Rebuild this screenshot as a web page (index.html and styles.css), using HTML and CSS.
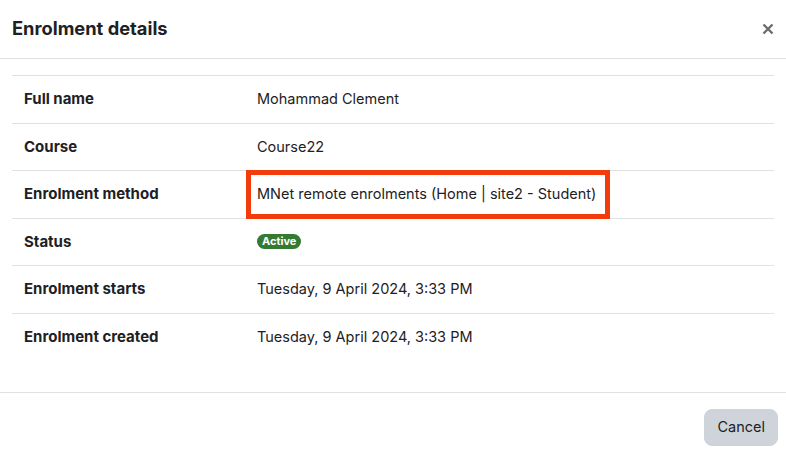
FILE: index.html
```html
<!DOCTYPE html>
<html lang="en">
<head>
    <meta charset="UTF-8">
    <meta name="viewport" content="width=device-width, initial-scale=1.0">
    <title>Enrolment details</title>
    <link rel="stylesheet" href="styles.css">
</head>
<body>
    <div class="modal">
        <div class="modal-header">
            <h5 class="modal-title">Enrolment details</h5>
            <button class="close" aria-label="Close">
                <svg width="12" height="12" viewBox="0 0 12 12">
                    <path d="M1.5 1.5 L10.5 10.5 M10.5 1.5 L1.5 10.5" stroke="#6a6e72" stroke-width="2.4" stroke-linecap="butt" />
                </svg>
            </button>
        </div>
        <div class="modal-body">
            <table class="details">
                <tr>
                    <th>Full name</th>
                    <td>Mohammad Clement</td>
                </tr>
                <tr>
                    <th>Course</th>
                    <td>Course22</td>
                </tr>
                <tr>
                    <th>Enrolment method</th>
                    <td class="highlighted">
                        MNet remote enrolments (Home | site2 - Student)
                        <span class="highlight-box"></span>
                    </td>
                </tr>
                <tr>
                    <th>Status</th>
                    <td><span class="badge">Active</span></td>
                </tr>
                <tr>
                    <th>Enrolment starts</th>
                    <td>Tuesday, 9 April 2024, 3:33 PM</td>
                </tr>
                <tr>
                    <th>Enrolment created</th>
                    <td>Tuesday, 9 April 2024, 3:33 PM</td>
                </tr>
            </table>
        </div>
        <div class="modal-footer">
            <button class="btn-secondary">Cancel</button>
        </div>
    </div>
</body>
</html>
```

FILE: styles.css
```css
body {
    margin: 0;
    background-color: #fff;
    color: #1d2125;
    font-family: 'Inter', 'Liberation Sans', sans-serif;
    font-size: 15px;
    line-height: 22.5px;
}

.modal {
    width: 786px;
    background-color: #fff;
}

.modal-header {
    display: flex;
    align-items: center;
    justify-content: space-between;
    height: 58px;
    padding: 0 12px;
    border-bottom: 1px solid #dee2e6;
}

.modal-title {
    margin: 0;
    font-size: 18.3px;
    font-weight: 700;
    line-height: 1.2;
}

.close {
    display: flex;
    align-items: center;
    justify-content: center;
    width: 20px;
    height: 20px;
    margin-right: -4px;
    padding: 0;
    border: none;
    background: none;
    cursor: pointer;
}

.modal-body {
    padding: 16px 12px;
}

.details {
    width: 100%;
    border-collapse: collapse;
    margin-bottom: 16px;
}

.details th,
.details td {
    padding: 12px;
    border-top: 1px solid #dee2e6;
    text-align: left;
    vertical-align: top;
}

.details th {
    width: 209px;
    font-weight: 700;
}

.details td {
    font-size: 14.5px;
}

.highlighted {
    position: relative;
}

.highlight-box {
    position: absolute;
    left: 1px;
    top: -1px;
    width: 354px;
    height: 39px;
    border: 5px solid #f33b0b;
}

.badge {
    display: inline-block;
    padding: 2px 5px;
    border-radius: 10px;
    background-color: #357a32;
    color: #fff;
    font-size: 11px;
    font-weight: 700;
    line-height: 1;
    vertical-align: 2px;
}

.modal-footer {
    display: flex;
    justify-content: flex-end;
    padding: 16px 8px 11px 12px;
    border-top: 1px solid #dee2e6;
}

.btn-secondary {
    padding: 6px 12px;
    border: 1px solid #ced4da;
    border-radius: 8px;
    background-color: #ced4da;
    color: #1d2125;
    font-family: inherit;
    font-size: 14.5px;
    line-height: 22.5px;
    cursor: pointer;
}
```
